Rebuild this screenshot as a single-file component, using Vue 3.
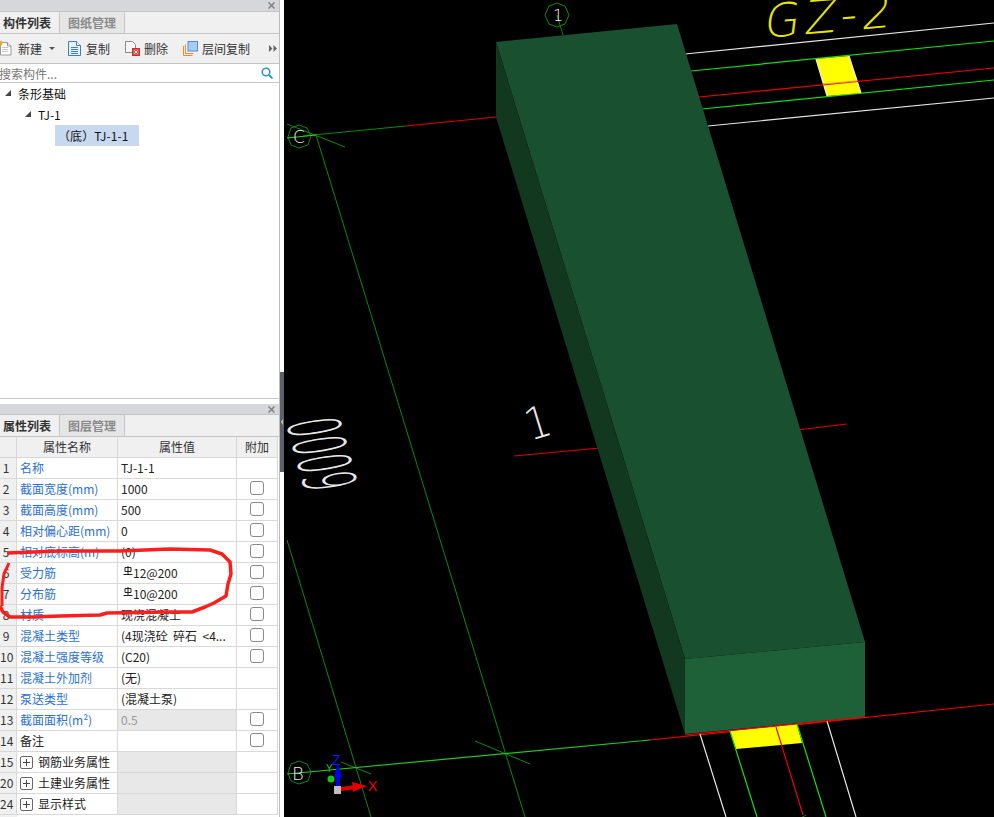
<template>
  <div class="app">
    <div class="side">
      <div class="panels">
        <section class="panel panel-top">
          <div class="title-bar">
            <svg class="close" width="7" height="7" viewBox="0 0 7 7"><path d="M0.500 0.500l6 6M6.500 0.500l-6 6" stroke="#808080" stroke-width="1.500" /></svg>
          </div>
          <div class="tabs">
            <div class="tab active">构件列表</div>
            <div class="tab">图纸管理</div>
          </div>
          <div class="toolbar">
            <div class="tool tool-new">
              <svg width="14" height="15" viewBox="0 0 14 15">
                <path d="M1.500 1.500h7l3.500 3.500v9h-10.500z" fill="#fff" stroke="#9a9a9a" />
                <path d="M8.500 1.500v3.500h3.500" fill="#eee" stroke="#9a9a9a" />
                <path d="M3 6.500h6M3 8.500h6M3 10.500h6" stroke="#c8c8c8" />
                <circle cx="1" cy="2" r="2.500" fill="#f5a623" />
              </svg>
              <span>新建</span>
              <i class="caret"></i>
            </div>
            <div class="tool tool-copy">
              <svg width="13" height="15" viewBox="0 0 13 15">
                <path d="M0.500 0.500h8l4 4v10h-12z" fill="#e8f1fb" stroke="#3b7fc4" />
                <path d="M8.500 0.500v4h4" fill="#fff" stroke="#3b7fc4" />
                <path d="M3 6.500h7M3 8.500h7M3 10.500h7M3 12.500h7" stroke="#3b7fc4" />
              </svg>
              <span>复制</span>
            </div>
            <div class="tool tool-del">
              <svg width="15" height="15" viewBox="0 0 15 15">
                <path d="M0.500 0.500h7l3 3v8h-10z" fill="#f6f6f6" stroke="#8a8a8a" />
                <rect x="7.500" y="7.500" width="7" height="7" fill="#e0524f" stroke="#c9302c" />
                <path d="M9.500 9.500l3 3M12.500 9.500l-3 3" stroke="#fff" />
              </svg>
              <span>删除</span>
            </div>
            <div class="tool tool-floor">
              <svg width="15" height="15" viewBox="0 0 15 15">
                <path d="M0.500 5v9.500h9" fill="none" stroke="#f08a24" />
                <path d="M2.500 3.500v9h8" fill="none" stroke="#f08a24" />
                <rect x="5" y="0.500" width="9.500" height="9.500" fill="#a8cdf5" stroke="#4a8fd8" />
              </svg>
              <span>层间复制</span>
            </div>
            <svg class="more" width="8" height="7" viewBox="0 0 8 7">
              <path d="M0 0l3.500 3.500L0 7zM4.500 0L8 3.500 4.500 7z" fill="#666" />
            </svg>
          </div>
          <div class="search">
            <span class="placeholder">搜索构件...</span>
            <svg width="12" height="12" viewBox="0 0 12 12">
              <circle cx="5" cy="5" r="3.800" fill="none" stroke="#2f8fd0" stroke-width="1.500" />
              <path d="M8 8l3.500 3.500" stroke="#2f8fd0" stroke-width="1.800" />
            </svg>
          </div>
          <div class="tree">
            <div class="node level-0"><i class="arrow"></i>条形基础</div>
            <div class="node level-1"><i class="arrow"></i>TJ-1</div>
            <div class="node level-2"><span class="selected">（底）TJ-1-1</span></div>
          </div>
        </section>

        <section class="panel panel-bottom">
          <div class="title-bar">
            <svg class="close" width="7" height="7" viewBox="0 0 7 7"><path d="M0.500 0.500l6 6M6.500 0.500l-6 6" stroke="#808080" stroke-width="1.500" /></svg>
          </div>
          <div class="tabs">
            <div class="tab active">属性列表</div>
            <div class="tab">图层管理</div>
          </div>
          <div class="grid">
            <div class="row head">
              <div class="cell idx"></div>
              <div class="cell name">属性名称</div>
              <div class="cell val">属性值</div>
              <div class="cell add">附加</div>
            </div>
            <div v-for="row in rows" :key="row.id" class="row">
              <div class="cell idx">{{ row.id }}</div>
              <div class="cell name" :class="{ plain: row.plain, group: row.group }">
                <i v-if="row.group" class="plus"></i>{{ row.name }}
              </div>
              <div class="cell val" :class="{ off: row.off, blank: row.group }">
                <svg v-if="row.bar" class="bar" width="10" height="11" viewBox="0 0 10 11">
                  <path d="M2 1.500h6v4h-6zM5 0v9M0.500 8.500h9" fill="none" stroke="#222" />
                </svg>{{ row.val }}
              </div>
              <div class="cell add"><i v-if="row.check" class="check"></i></div>
            </div>
            <div class="row tail">
              <div class="cell idx"></div>
            </div>
          </div>
        </section>
      </div>
      <div class="splitter"></div>

      <!-- hand drawn mark over the table -->
      <svg class="mark" width="284" height="817" viewBox="0 0 284 817">
        <path
          d="M7 553 L60 551 L120 551 L170 549 L210 550 L222 554 L230 562 L231 574 L228 584 L226 596 L214 603 L205 607 L192 612 L167 612 L107 613 L100 615 L60 616 L33 617 L10 617 L3 612 L0 606"
          fill="none" stroke="#f8201c" stroke-width="3.500" stroke-linejoin="round"
        />
        <path d="M9 563 L4 574 L2 588 L2 606" fill="none" stroke="#f8201c" stroke-width="3" />
      </svg>
    </div>

    <svg class="cad" width="710" height="817" viewBox="284 0 710 817">
      <rect x="284" y="0" width="710" height="817" fill="#000" />

      <!-- grid lines -->
      <g fill="none" stroke="#0a8a0a">
        <path d="M316 135 L525 817" />
        <path d="M287 540 L371 817" />
        <path d="M287 124 L345 147" />
        <path d="M341 762 L371 774" />
        <path d="M475 741 L530 764" />
        <path d="M557 15 L563 35" />
        <path d="M303 136 L406 126" />
        <path d="M299 125l8 3 4 8-3 9-9 3-8-3-3-8 3-9z" />
        <path d="M299 761l8 3 4 8-3 9-9 3-8-3-3-8 3-9z" />
        <path d="M557 3l8 3 4 9-4 9-8 3-8-3-4-9 4-9z" />
        <path d="M806 815l-7 4" />
      </g>
      <path d="M287 138 L316 135" fill="none" stroke="#22d822" />
      <path d="M406 126 L496 117" fill="none" stroke="#e00000" stroke-width="1.200" />
      <path d="M287 774 L650 740" fill="none" stroke="#22c822" stroke-width="1.200" />
      <path d="M650 740 L994 704" fill="none" stroke="#f00000" stroke-width="1.200" />
      <path d="M514 456 L600 448" fill="none" stroke="#e00000" stroke-width="1.200" />
      <path d="M797 430 L847 424" fill="none" stroke="#e00000" stroke-width="1.200" />

      <!-- beam behind, top right -->
      <path d="M685 54 L994 23" class="beam-white" />
      <path d="M691 71 L994 41" class="beam-green" />
      <path d="M708 126 L994 98" class="beam-white" />
      <path d="M702 109 L994 80" class="beam-green" />
      <polygon points="816,59 849,56 861,93 827,96" fill="#ffff00" />
      <path d="M816 59 L827 96 M849 56 L861 93" class="beam-white" />
      <path d="M699 97 L994 68" class="beam-red" />
      <path d="M823 84 L857 81" stroke="#f59a20" fill="none" />

      <!-- beam in front, bottom -->
      <polygon points="730,731 797,724 802,743 736,749" fill="#ffff00" />
      <path d="M700 734 L726 817 M827 721 L856 817" class="beam-white" />
      <path d="M730 731 L757 817 M797 724 L826 817" class="beam-green" />
      <path d="M776 727 L803 815" class="beam-red" />

      <!-- footing -->
      <polygon points="496,42 677,24 865,642 685,659" fill="#185030" />
      <polygon points="496,42 685,659 685,734 496,117" fill="#123820" />
      <polygon points="685,659 865,642 865,717 685,734" fill="#1e6038" />
      <path d="M685 735 L865 717" fill="none" stroke="#f00000" stroke-width="1.200" />

      <!-- labels -->
      <text class="cad-label" x="553" y="21" font-size="16">1</text>
      <text class="cad-label" x="293" y="143" font-size="17">C</text>
      <text class="cad-label" x="292" y="780" font-size="18">B</text>
      <text class="cad-thin" transform="translate(530 441) rotate(-17) scale(1 1.100)" font-size="40" fill="#e8e8e8">1</text>
      <text class="cad-thin" transform="matrix(-0.112 -0.404 1.020 -0.157 358 486)" font-size="70" fill="#e8e8e8">6000</text>
      <text class="cad-thin" transform="translate(763 38) rotate(-5) skewX(-12)" font-size="46" letter-spacing="5" fill="#e6e600">GZ-2</text>

      <!-- axis gizmo -->
      <path d="M338 786 L338 770" stroke="#0000f0" stroke-width="4" />
      <path d="M338 763 L342 777 L334 777 z" fill="#0000f0" />
      <circle cx="331" cy="779" r="3.500" fill="#12c812" />
      <path d="M341 789 L356 787" stroke="#e00000" stroke-width="4" />
      <path d="M367 786 L352 782 L353 792 z" fill="#e00000" />
      <rect x="334" y="786" width="7" height="8" fill="#c0c0c0" />
      <text class="axis" x="332" y="765" font-size="14" fill="#1212ff">Z</text>
      <text class="axis" x="326" y="772" font-size="10" fill="#12c812">Y</text>
      <text class="axis" x="368" y="791" font-size="14" fill="#f00000">X</text>
    </svg>
  </div>
</template>

<script setup>
const rows = [
  { id: 1, name: "名称", val: "TJ-1-1" },
  { id: 2, name: "截面宽度(mm)", val: "1000", check: true },
  { id: 3, name: "截面高度(mm)", val: "500", check: true },
  { id: 4, name: "相对偏心距(mm)", val: "0", check: true },
  { id: 5, name: "相对底标高(m)", val: "(0)", check: true },
  { id: 6, name: "受力筋", val: "12@200", bar: true, check: true },
  { id: 7, name: "分布筋", val: "10@200", bar: true, check: true },
  { id: 8, name: "材质", val: "现浇混凝土", check: true },
  { id: 9, name: "混凝土类型", val: "(4现浇砼  碎石  <4...", check: true },
  { id: 10, name: "混凝土强度等级", val: "(C20)", check: true },
  { id: 11, name: "混凝土外加剂", val: "(无)" },
  { id: 12, name: "泵送类型", val: "(混凝土泵)" },
  { id: 13, name: "截面面积(m²)", val: "0.5", off: true, check: true },
  { id: 14, name: "备注", val: "", plain: true, check: true },
  { id: 15, name: "钢筋业务属性", val: "", group: true },
  { id: 20, name: "土建业务属性", val: "", group: true },
  { id: 24, name: "显示样式", val: "", group: true },
];
</script>

<style>
html, body { margin: 0; background: #000; }
</style>

<style scoped>
.app {
  display: flex;
  width: 994px;
  height: 817px;
  overflow: hidden;
  font-family: "Noto Sans CJK SC", "Liberation Sans", sans-serif;
  font-size: 12px;
  color: #222;
}

.side {
  position: relative;
  display: flex;
  flex: 0 0 284px;
  background: #fff;
}

.panels {
  flex: 0 0 280px;
  display: flex;
  flex-direction: column;
  gap: 5px;
  border-right: 1px solid #bdbdbd;
  box-sizing: border-box;
}

.splitter {
  position: relative;
  flex: 0 0 4px;
  height: 100px;
  margin-top: 372px;
  background: #5d6068;
}
.splitter::after {
  content: "";
  position: absolute;
  left: 1px;
  top: 47px;
  border-right: 2px solid #c8c8c8;
  border-top: 3px solid transparent;
  border-bottom: 3px solid transparent;
}

.panel { display: flex; flex-direction: column; }
.panel-top { height: 399px; border-bottom: 1px solid #c8c8c8; box-sizing: border-box; }
.panel-bottom { flex: 1; min-height: 0; overflow: hidden; }

.title-bar {
  height: 11px;
  flex-shrink: 0;
  background: #d6d7db;
  border-bottom: 1px solid #c4c4c4;
  display: flex;
  justify-content: flex-end;
  align-items: center;
}
.panel-bottom .title-bar { height: 10px; }
.close { margin-right: 4px; }

.tabs {
  height: 21px;
  flex-shrink: 0;
  display: flex;
  background: #f0f0f0;
  border-bottom: 1px solid #c4c4c4;
}
.tab {
  width: 65px;
  box-sizing: border-box;
  border-right: 1px solid #c4c4c4;
  background: #e6e6e6;
  color: #8a8a8a;
  font-weight: 700;
  line-height: 21px;
  text-align: center;
}
.tab.active {
  width: 60px;
  background: #f0f0f0;
  color: #333;
  text-align: left;
  padding-left: 3px;
}

.toolbar {
  position: relative;
  height: 29px;
  flex-shrink: 0;
  display: flex;
  align-items: center;
  background: #f0f0f0;
  border-bottom: 1px solid #c4c4c4;
}
.tool { display: flex; align-items: center; gap: 4px; color: #333; }
.tool-new { margin-left: -1px; gap: 5px; }
.tool-copy { margin-left: 13px; gap: 5px; }
.tool-del { margin-left: 15px; }
.tool-floor { margin-left: 15px; }
.caret {
  margin-left: 2px;
  border-top: 3px solid #555;
  border-left: 3px solid transparent;
  border-right: 3px solid transparent;
}
.more { position: absolute; right: 2px; top: 11px; }

.search {
  height: 18px;
  flex-shrink: 0;
  display: flex;
  align-items: center;
  justify-content: space-between;
  padding-right: 6px;
  border-bottom: 1px solid #c4c4c4;
  color: #777;
}
.placeholder { margin-left: -1px; }

.tree { flex: 1; }
.node { height: 21px; line-height: 21px; white-space: nowrap; color: #111; display: flex; align-items: center; }
.level-0 { padding-left: 5px; padding-bottom: 1px; box-sizing: border-box; }
.level-1 { padding-left: 25px; padding-bottom: 1px; box-sizing: border-box; }
.level-2 { padding-left: 55px; }
.arrow {
  width: 0;
  height: 0;
  margin-right: 7px;
  border-bottom: 6px solid #444;
  border-left: 6px solid transparent;
}
.selected {
  display: block;
  width: 84px;
  box-sizing: border-box;
  padding-left: 3px;
  background: #c7d8ef;
  letter-spacing: 0.1px;
}

.grid { display: flex; flex-direction: column; }
.row {
  height: 21px;
  flex-shrink: 0;
  display: grid;
  grid-template-columns: 17px 101px 119px 41px;
}
.cell {
  box-sizing: border-box;
  height: 21px;
  line-height: 20px;
  border-right: 1px solid #d8d8d8;
  border-bottom: 1px solid #d8d8d8;
  white-space: pre;
  overflow: hidden;
}
.idx {
  background: #f0f0f0;
  text-align: center;
  padding-right: 4px;
  color: #333;
}
.name { padding-left: 3px; color: #2b6fd8; display: flex; align-items: center; }
.name.plain { color: #222; }
.name.group { color: #222; }
.val { padding-left: 3px; color: #222; display: flex; align-items: center; }
.val.off { background: #e8e8e8; color: #999; }
.val.blank { background: #e8e8e8; }
.add { display: flex; align-items: center; justify-content: center; padding-right: 1px; }
.head .cell { background: #f0f0f0; color: #333; text-align: center; display: block; padding: 0; }
.tail { height: 3px; }
.tail .idx { height: 3px; border: 0; }

.bar { margin: -3px 0 0 2px; }
.check {
  width: 14px;
  height: 14px;
  margin-top: -2px;
  box-sizing: border-box;
  border: 1px solid #8a8a8a;
  border-radius: 3px;
  background: #fff;
}
.plus {
  position: relative;
  width: 13px;
  height: 13px;
  box-sizing: border-box;
  margin: 0 5px 0 0;
  border: 1px solid #666;
  border-radius: 2px;
}
.plus::before, .plus::after {
  content: "";
  position: absolute;
  background: #444;
}
.plus::before { left: 2px; right: 2px; top: 5px; height: 1px; }
.plus::after { top: 2px; bottom: 2px; left: 5px; width: 1px; }

.mark { position: absolute; left: 0; top: 0; pointer-events: none; }

.cad { flex: 0 0 710px; display: block; }
.beam-white { fill: none; stroke: #e8e8e8; stroke-width: 1.200; }
.beam-green { fill: none; stroke: #10e010; stroke-width: 1.200; }
.beam-red { fill: none; stroke: #f00000; stroke-width: 1.200; }
.cad-label { font-family: "DejaVu Sans", sans-serif; font-weight: 200; fill: #eee; }
.cad-thin { font-family: "DejaVu Sans", sans-serif; font-weight: 200; }
.axis { font-family: "Liberation Sans", sans-serif; }
</style>
